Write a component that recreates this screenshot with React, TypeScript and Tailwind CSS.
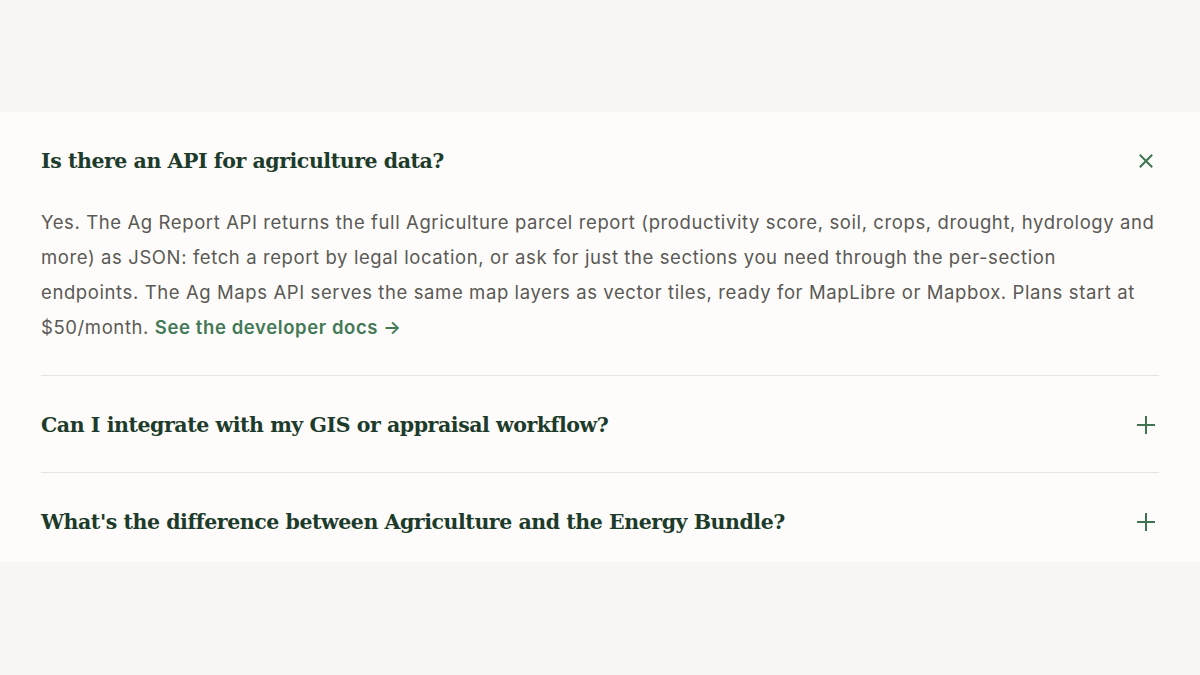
import { useState } from "react";

type Faq = { q: string; a?: React.ReactNode };

const faqs: Faq[] = [
  {
    q: "Is there an API for agriculture data?",
    a: (
      <>
        Yes. The Ag Report API returns the full Agriculture parcel report (productivity score, soil, crops, drought,
        hydrology and more) as JSON: fetch a report by legal location, or ask for just the sections you need through the
        per-section endpoints. The Ag Maps API serves the same map layers as vector tiles, ready for MapLibre or Mapbox.
        Plans start at $50/month.{" "}
        <a href="#" className="font-semibold text-[#437957]">
          See the developer docs →
        </a>
      </>
    ),
  },
  { q: "Can I integrate with my GIS or appraisal workflow?" },
  { q: "What's the difference between Agriculture and the Energy Bundle?" },
];

function Icon({ open }: { open: boolean }) {
  return open ? (
    <svg width="18" height="18" viewBox="0 0 18 18" fill="none" stroke="#3e7452" strokeWidth="2" strokeLinecap="square">
      <path d="M3.5 3.5l11 11M14.5 3.5l-11 11" />
    </svg>
  ) : (
    <svg width="20" height="20" viewBox="0 0 20 20" fill="none" stroke="#3e7452" strokeWidth="2">
      <path d="M10 1v18M1 10h18" />
    </svg>
  );
}

export default function App() {
  const [open, setOpen] = useState<number>(0);

  return (
    <div className="min-h-[675px] bg-[#f7f6f2] pt-[112px]">
      <div className="bg-[#fdfcfa] px-[41px]">
        {faqs.map((f, i) => (
          <div
            key={f.q}
            className={i < faqs.length - 1 ? "border-b border-[#e6e4df]" : ""}
          >
            <button
              onClick={() => setOpen(open === i ? -1 : i)}
              className={
                "flex w-full items-center justify-between text-left " +
                (i === faqs.length - 1 ? "pt-[34px] pb-[25px]" : i === 0 ? "pt-[34px]" : "pt-[34px] pb-[32px]")
              }
            >
              <span className="text-[20.5px] leading-[30px] font-bold text-[#1d3b2b] [font-family:'DejaVu_Serif',serif] tracking-[-0.45px]">
                {f.q}
              </span>
              <span className="mr-[3px] flex h-[20px] w-[20px] items-center justify-center">
                <Icon open={open === i} />
              </span>
            </button>
            {open === i && f.a && (
              <p className="pt-[29px] pb-[30px] pr-[2px] text-[18.5px] leading-[35px] tracking-[0.6px] text-[#5a5955] [font-family:Inter,'Liberation_Sans',sans-serif]">
                {f.a}
              </p>
            )}
          </div>
        ))}
      </div>
    </div>
  );
}
